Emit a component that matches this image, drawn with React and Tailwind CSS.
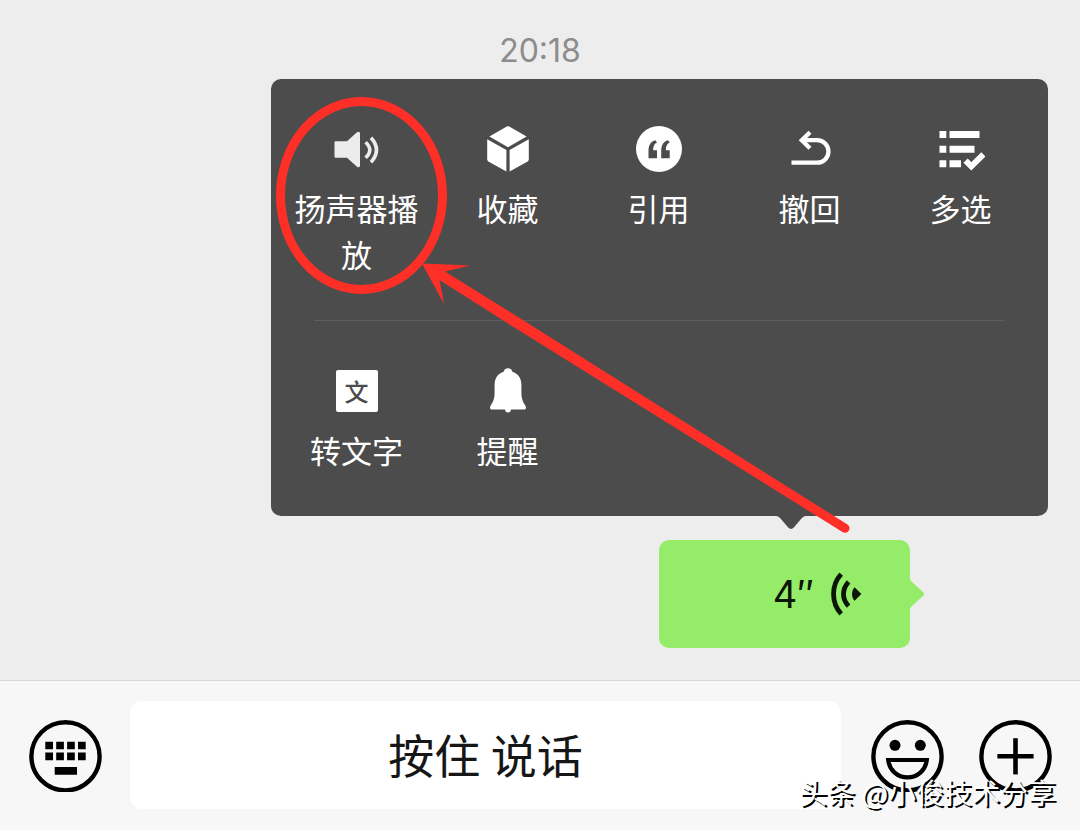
const menuRows = [
  [
    { label: "扬声器播放", icon: SpeakerIcon },
    { label: "收藏", icon: CubeIcon },
    { label: "引用", icon: QuoteIcon },
    { label: "撤回", icon: RecallIcon },
    { label: "多选", icon: MultiSelectIcon },
  ],
  [
    { label: "转文字", icon: ToTextIcon },
    { label: "提醒", icon: BellIcon },
  ],
];

function MenuSvg({ children }) {
  return (
    <svg viewBox="0 0 48 48" className="size-12 shrink-0" fill="currentColor" aria-hidden="true">
      {children}
    </svg>
  );
}

function SpeakerIcon() {
  return (
    <MenuSvg>
      <g className="text-[#ececec]">
        <path d="M2.5 16.3H14L24 7.3Q27 5.6 27 8.4V40.6Q27 43.4 24 41.7L14 32.7H2.5Q1.5 32.7 1.5 31.7V17.3Q1.5 16.3 2.5 16.3z" fill="currentColor" />
        <path d="M32.6 17.2Q41 25 32.6 32.8M38 12.8Q49 25 38 37.2" fill="none" stroke="currentColor" strokeWidth="3.6" />
      </g>
    </MenuSvg>
  );
}

function CubeIcon() {
  return (
    <MenuSvg>
      <path d="M22.8 1.5Q24 .8 25.2 1.5L42.6 11.6 24 22.3 5.4 11.6z" />
      <path d="M3.2 14.2L22.4 25V46.6L4.4 36.4Q3.2 35.7 3.2 34.5z" />
      <path d="M44.8 14.2L25.6 25V46.6L43.6 36.4Q44.8 35.7 44.8 34.5z" />
    </MenuSvg>
  );
}

function QuoteIcon() {
  return (
    <MenuSvg>
      <circle cx="24" cy="24" r="23" />
      <g className="text-[#4c4c4c]" fill="currentColor">
        <path d="M13.5 33.3V25.5C13.5 20 16 16.4 20.4 15.2L22 17.6C19.4 18.7 18.2 21 18.1 25.2H22V33.3z" />
        <path d="M26.2 33.3V25.5C26.2 20 28.7 16.4 33.1 15.2L34.7 17.6C32.1 18.7 30.9 21 30.8 25.2H34.7V33.3z" />
      </g>
    </MenuSvg>
  );
}

function RecallIcon() {
  return (
    <MenuSvg>
      <g fill="none" stroke="currentColor" strokeWidth="4.3">
        <path d="M15.5 15.2H31.2a11.25 11.25 0 0 1 0 22.5H5.5" />
        <path d="M24 7.2L15.8 15.2L24 23.2" />
      </g>
    </MenuSvg>
  );
}

function MultiSelectIcon() {
  return (
    <MenuSvg>
      <path d="M2.5 6h6.8v7H2.5zM12.5 6h30v7h-30zM2.5 20.7h6.8v7H2.5zM12.5 20.7h25v7h-25zM2.5 35.3h6.8v7H2.5zM12.5 35.3H24v7H12.5z" />
      <path d="M28.6 35.6L34.3 41.3L46.4 29.4" fill="none" stroke="currentColor" strokeWidth="6" />
    </MenuSvg>
  );
}

function ToTextIcon() {
  return (
    <span className="flex size-12 shrink-0 items-center justify-center" aria-hidden="true">
      <span className="flex size-[42px] items-center justify-center rounded-xs bg-white text-2xl leading-6 font-medium text-[#4c4c4c]">
        文
      </span>
    </span>
  );
}

function BellIcon() {
  return (
    <MenuSvg>
      <circle cx="24" cy="5.8" r="4.5" />
      <path d="M24 4.2C15.5 4.2 10.6 9.6 10.6 18V25C10.6 31 9.6 34 6.6 38.8C5.4 40.9 6.2 42.4 8 42.4H40C41.8 42.4 42.6 40.9 41.4 38.8C38.4 34 37.4 31 37.4 25V18C37.4 9.6 32.5 4.2 24 4.2z" />
      <path d="M21 42H27Q27 45.4 24 45.4T21 42z" />
    </MenuSvg>
  );
}

function VoiceIcon() {
  return (
    <svg viewBox="0 0 32 44" className="h-11 w-8" aria-hidden="true">
      <g fill="none" stroke="currentColor" strokeWidth="4.8">
        <path d="M11.2 2.2C1 13 1 31 11.2 41.8" />
        <path d="M18.6 9.8C11.8 17 11.8 27 18.6 34.2" />
      </g>
      <path d="M24.6 15.2L31.4 22L24.6 28.8C21.2 25.4 21.2 18.6 24.6 15.2z" fill="currentColor" />
    </svg>
  );
}

function BarButton({ label, children }) {
  return (
    <button type="button" aria-label={label} className="shrink-0 text-black">
      <svg viewBox="0 -2 73 74" className="h-[74px] w-[73px]" fill="currentColor" aria-hidden="true">
        <circle cx="36.5" cy="36.3" r="34.1" fill="none" stroke="currentColor" strokeWidth="4.4" />
        {children}
      </svg>
    </button>
  );
}

function MessageMenu() {
  return (
    <div className="relative mt-2 mr-8 ml-[271px] rounded-[10px] bg-[#4c4c4c] text-white">
      {menuRows.map((row, index) => (
        <div key={index}>
          {index > 0 ? <hr className="mx-[43px] border-t border-[#5e5e5e]" /> : null}
          <div className="grid grid-cols-5 items-start pt-[46px] pr-3 pb-[43px] pl-[10px]">
            {row.map(({ label, icon: Icon }) => (
              <button key={label} type="button" className="flex flex-col items-center gap-3">
                <Icon />
                <span className="px-3 text-[31px] leading-[46px]">{label}</span>
              </button>
            ))}
          </div>
        </div>
      ))}

      <svg viewBox="0 0 30 14" className="absolute top-full left-[505px] h-[14px] w-[30px] text-[#4c4c4c]" aria-hidden="true">
        <path d="M0 0C2 .3 3 1 4.5 2.6L12.2 11.6Q15 14.4 17.8 11.6L25.5 2.6C27 1 28 .3 30 0z" fill="currentColor" />
      </svg>

      {/* hand-drawn marker over the speaker entry */}
      <svg
        viewBox="0 0 600 470"
        className="pointer-events-none absolute top-0 left-0 h-[470px] w-[600px] text-[#fe2f27]"
        aria-hidden="true"
      >
        <ellipse cx="90.5" cy="116.5" rx="81" ry="94" fill="none" stroke="currentColor" strokeWidth="9" />
        <path
          d="M151 184.5L199 186.5L174 192.5L249 239.3L576.5 445.5A4.5 4.5 0 0 1 571.5 453L249 252L168.5 201L173 225z"
          fill="currentColor"
        />
      </svg>
    </div>
  );
}

function VoiceMessage() {
  return (
    <div className="mt-6 mr-[170px] flex justify-end">
      <button
        type="button"
        aria-label="4″"
        className="relative flex h-[108px] w-[251px] items-center justify-end gap-4 rounded-[10px] bg-[#95ec69] pr-12 text-[#0b1606]"
      >
        <span className="font-['Inter','Noto_Sans_CJK_SC',sans-serif] text-[38px] leading-[46px]">4″</span>
        <VoiceIcon />
        <svg viewBox="0 0 15 30" className="absolute top-[39px] left-full h-[30px] w-[15px] text-[#95ec69]" aria-hidden="true">
          <path d="M0 0C.4 1.4 1 2 2 3L13 13Q15 15 13 17L2 27C1 28 .4 28.6 0 30z" fill="currentColor" />
        </svg>
      </button>
    </div>
  );
}

function InputBar() {
  return (
    <footer className="flex items-center border-t border-[#d6d6d6] bg-[#f7f7f7] pt-5 pr-7 pb-[21px] pl-[29px]">
      <BarButton label="键盘">
        <path d="M16.3 21.7h7.7v7.6h-7.7zM27.2 21.7h7.7v7.6h-7.7zM38.1 21.7h7.7v7.6h-7.7zM49 21.7h7.7v7.6H49zM16.3 32.6h7.7v7.6h-7.7zM27.2 32.6h7.7v7.6h-7.7zM38.1 32.6h7.7v7.6h-7.7zM49 32.6h7.7v7.6H49zM25.7 47h22.3v7.7H25.7z" />
      </BarButton>
      <button
        type="button"
        className="ml-7 h-[108px] min-w-0 flex-1 rounded-xl bg-white pb-1 text-[46px] leading-[60px] text-[#161616]"
      >
        按住 说话
      </button>
      <div className="ml-[30px] flex gap-[35px]">
        <BarButton label="表情">
          <circle cx="24" cy="25.3" r="5.5" />
          <circle cx="49.3" cy="25.3" r="5.5" />
          <path
            d="M17.2 40H55.8C54.5 50.5 46.5 57.4 36.5 57.4S18.5 50.5 17.2 40z"
            fill="none"
            stroke="currentColor"
            strokeWidth="4.2"
          />
        </BarButton>
        <BarButton label="更多">
          <path d="M34.2 18.2h4.6v36.2h-4.6z" />
          <path d="M18.4 34h36.2v4.6H18.4z" />
        </BarButton>
      </div>
    </footer>
  );
}

export default function App() {
  return (
    <div className="relative flex min-h-screen flex-col bg-[#ededed] font-['Noto_Sans_CJK_SC',sans-serif]">
      <main className="flex-1 pt-[31px]">
        <p className="text-center font-['Inter',sans-serif] text-[32px] leading-10 text-[#8c8c8c]">20:18</p>
        <MessageMenu />
        <VoiceMessage />
      </main>
      <InputBar />
      <p className="pointer-events-none absolute right-6 bottom-[18px] text-[28px] leading-10 whitespace-nowrap text-white [text-shadow:2px_2px_0_#000]">
        头条 @小俊技术分享
      </p>
    </div>
  );
}
